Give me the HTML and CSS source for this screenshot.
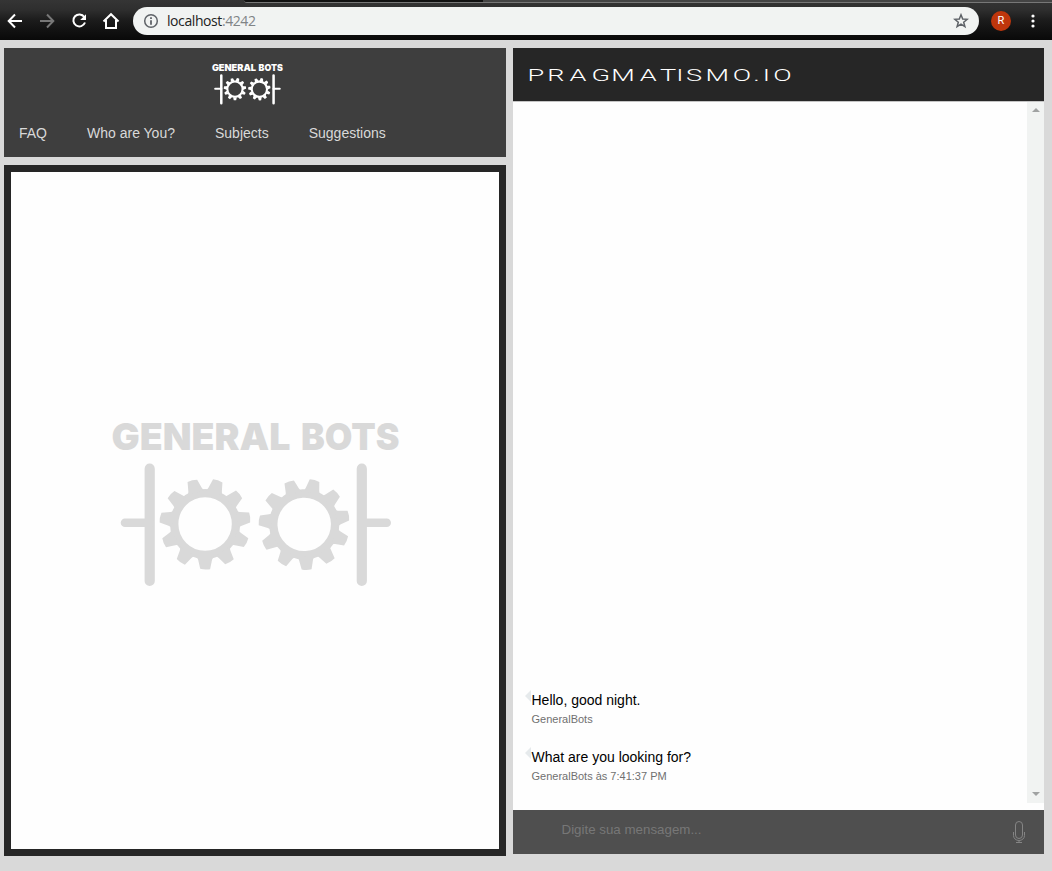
FILE: index.html
```
<!DOCTYPE html>
<html lang="en">
<head>
<meta charset="utf-8">
<title>General Bots</title>
<link rel="stylesheet" href="styles.css">
</head>
<body>
<svg class="defs" aria-hidden="true">
  <defs>
    <path id="tooth" d="M-9.2 32.500 Q-7.300 33.500 -6.900 36 L-4.900 44.800 Q0 46.200 5 45.200 L6.900 36 Q7.300 33.500 9.200 32.500Z" fill="currentColor"/>
    <g id="gear">
      <circle r="30.900" fill="none" stroke="currentColor" stroke-width="8.400"/>
      <use href="#tooth"/>
      <use href="#tooth" transform="rotate(32.727)"/>
      <use href="#tooth" transform="rotate(65.455)"/>
      <use href="#tooth" transform="rotate(98.182)"/>
      <use href="#tooth" transform="rotate(130.909)"/>
      <use href="#tooth" transform="rotate(163.636)"/>
      <use href="#tooth" transform="rotate(196.364)"/>
      <use href="#tooth" transform="rotate(229.091)"/>
      <use href="#tooth" transform="rotate(261.818)"/>
      <use href="#tooth" transform="rotate(294.545)"/>
      <use href="#tooth" transform="rotate(327.273)"/>
    </g>
    <symbol id="logo" viewBox="108 418 296 172">
      <text class="logo-text" x="111.500" y="450.300" textLength="179" lengthAdjust="spacingAndGlyphs">GENERAL</text>
      <text class="logo-text" x="301" y="450.300" textLength="98.500" lengthAdjust="spacingAndGlyphs">BOTS</text>
      <g fill="none" stroke="currentColor" stroke-linecap="round">
        <path d="M149.700 468.700V581M361.800 468.700V581" stroke-width="10.200"/>
        <path d="M125 522.700H149.700M361.800 522.700H386.700" stroke-width="8.600"/>
      </g>
      <use href="#gear" transform="translate(205.100 524)"/>
      <use href="#gear" transform="translate(304.200 524.400) rotate(-3)"/>
    </symbol>
  </defs>
</svg>

<header class="browser">
  <div class="tabs"><span class="tab"></span><span class="tabs-rest"></span></div>
  <div class="toolbar">
    <svg class="nav" width="133" height="38" viewBox="0 2 133 38" fill="none" stroke="#fff" stroke-width="2">
      <path d="M22 21H9M15 14.500L8.700 21L15 27.500"/>
      <path d="M40 21H53M47 14.500L53.300 21L47 27.500" stroke="#777"/>
      <path d="M84.300 17A6 6 0 1 0 85 22.500"/>
      <path d="M86 14.200V20H80.200Z" fill="#fff" stroke="none"/>
      <path d="M103.500 21.500L111 14.200L118.500 21.500M106 20V28H116V20"/>
    </svg>
    <div class="address">
      <svg class="info" width="16" height="16" viewBox="0 0 16 16"><circle cx="8" cy="8" r="6.300" fill="none" stroke="#5f6368" stroke-width="1.500"/><path d="M8 7.200V11.700M8 4.300V6" stroke="#5f6368" stroke-width="1.800"/></svg>
      <span class="url">localhost<span class="port">:4242</span></span>
      <svg class="star" width="16" height="16" viewBox="0 0 16 16"><path d="M8 1.800L9.700 6L14.200 6.300L10.700 9.200L11.900 13.700L8 11.200L4.100 13.700L5.300 9.200L1.800 6.300L6.300 6Z" fill="none" stroke="#5f6368" stroke-width="1.500"/></svg>
    </div>
    <span class="avatar">R</span>
    <svg class="dots" width="6" height="16" viewBox="0 0 6 16" fill="#fff"><circle cx="3" cy="3" r="1.600"/><circle cx="3" cy="8" r="1.600"/><circle cx="3" cy="13" r="1.600"/></svg>
  </div>
</header>

<main class="app">
  <section class="left">
    <div class="menu">
      <svg class="logo-small"><use href="#logo"/></svg>
      <nav class="links"><a>FAQ</a><a>Who are You?</a><a>Subjects</a><a>Suggestions</a></nav>
    </div>
    <div class="stage"><svg class="logo-big"><use href="#logo"/></svg></div>
  </section>
  <section class="chat">
    <div class="chat-head">
      <svg width="290" height="24" viewBox="0 0 290 24"><text class="brand" transform="scale(1.7 1)" y="17.200" x="8 19.600 32.700 45.600 57.200 73.900 85.900 95.400 101.200 112.700 128.700 140.800 146.300 152.500">PRAGMATISMO.IO</text></svg>
    </div>
    <div class="history">
      <div class="messages">
        <div class="message"><p class="bubble">Hello, good night.</p><p class="meta">GeneralBots</p></div>
        <div class="message"><p class="bubble">What are you looking for?</p><p class="meta">GeneralBots às 7:41:37 PM</p></div>
      </div>
      <div class="scrollbar">
        <svg width="8" height="4"><path d="M0 4L4 0L8 4Z" fill="#a0a2a2"/></svg>
        <svg width="8" height="4"><path d="M0 0L4 4L8 0Z" fill="#a0a2a2"/></svg>
      </div>
    </div>
    <div class="composer">
      <span>Digite sua mensagem...</span>
      <svg width="14" height="24" viewBox="0 0 14 24" fill="none" stroke="#858585"><rect x="3.500" y="1.500" width="7" height="17" rx="3.500"/><path d="M1.500 12V15.500C1.500 18.500 4 20.500 7 20.500S12.500 18.500 12.500 15.500V12M7 20.500V22.500M4 22.500H10"/></svg>
    </div>
  </section>
</main>
</body>
</html>
```
FILE: styles.css
```
* { box-sizing: border-box; }
body { margin: 0; width: 1052px; height: 871px; overflow: hidden; background: #d9d9d9; font-family: "Liberation Sans", Arial, sans-serif; }
p { margin: 0; }
svg { display: block; }
.defs { position: absolute; width: 0; height: 0; }

.browser { height: 40px; background: linear-gradient(#353535 0, #2e2e2e 10px, #1c1c1c 20px, #121212 30px, #090909 40px); }
.tabs { display: flex; height: 3px; padding-left: 244px; }
.tab { width: 239px; background: #111; border-bottom: 1px solid #777; border-bottom-left-radius: 3px; }
.tabs-rest { flex: 1; background: #444; border-bottom: 1px solid #777; }
.toolbar { display: flex; align-items: center; height: 36px; }
.nav { flex: none; }
.address { display: flex; align-items: center; width: 846px; height: 28px; padding: 0 10px; border-radius: 14px; background: #f1f3f2; }
.url { flex: 1; margin-left: 8px; font: 14px/20px "Open Sans", sans-serif; letter-spacing: -0.420px; color: #222; }
.port { color: #808486; }
.avatar { width: 20px; height: 20px; margin-left: 12px; border-radius: 50%; background: #bf360c; color: #fff; font: 11px/20px Roboto, sans-serif; text-align: center; }
.dots { margin-left: 19px; }

.app { display: flex; gap: 7px; padding: 8px 8px 0 4px; }
.left { width: 502px; display: flex; flex-direction: column; gap: 8px; }
.menu { height: 109px; padding: 15px 15px 0; background: #3e3e3e; color: #fff; }
.logo-small { width: 73px; height: 42.400px; margin-left: 192px; }
.links { display: flex; gap: 40px; margin-top: 18px; font-size: 14px; line-height: 20px; color: #d9d9d9; }
.logo-text { font: 900 37.500px Inter, sans-serif; fill: currentColor; }
.stage { height: 691px; padding: 246px 0 0 97px; border: 7px solid #262626; background: #fefefe; color: #d9d9d9; }
.logo-big { width: 296px; height: 172px; }

.chat { width: 531px; }
.chat-head { height: 54px; padding: 16px 0 0 1px; background: #262626; border-bottom: 1px solid #c4c4c4; }
.brand { font: 300 16px Roboto, sans-serif; fill: #fff; }
.history { display: flex; height: 708px; background: #fefefe; }
.messages { flex: 1; padding: 589px 0 0 12px; }
.message { position: relative; height: 57px; padding-left: 6.500px; }
.message::before { content: ""; position: absolute; left: 0; top: -1px; border: 6px solid transparent; border-right: 6px solid #e6eaec; border-left: 0; }
.bubble { font-size: 14px; line-height: 18px; color: #000; }
.meta { margin-top: 3px; font-size: 11px; line-height: 14px; color: #707070; }
.scrollbar { display: flex; flex-direction: column; justify-content: space-between; align-items: center; width: 17px; height: 701px; padding: 6px 0 7px; background: #f1f3f2; }
.composer { display: flex; justify-content: space-between; height: 44px; padding: 10px 18px 0 48.500px; background: #4f4f4f; color: #777; font-size: 13.330px; line-height: 19px; }
```
